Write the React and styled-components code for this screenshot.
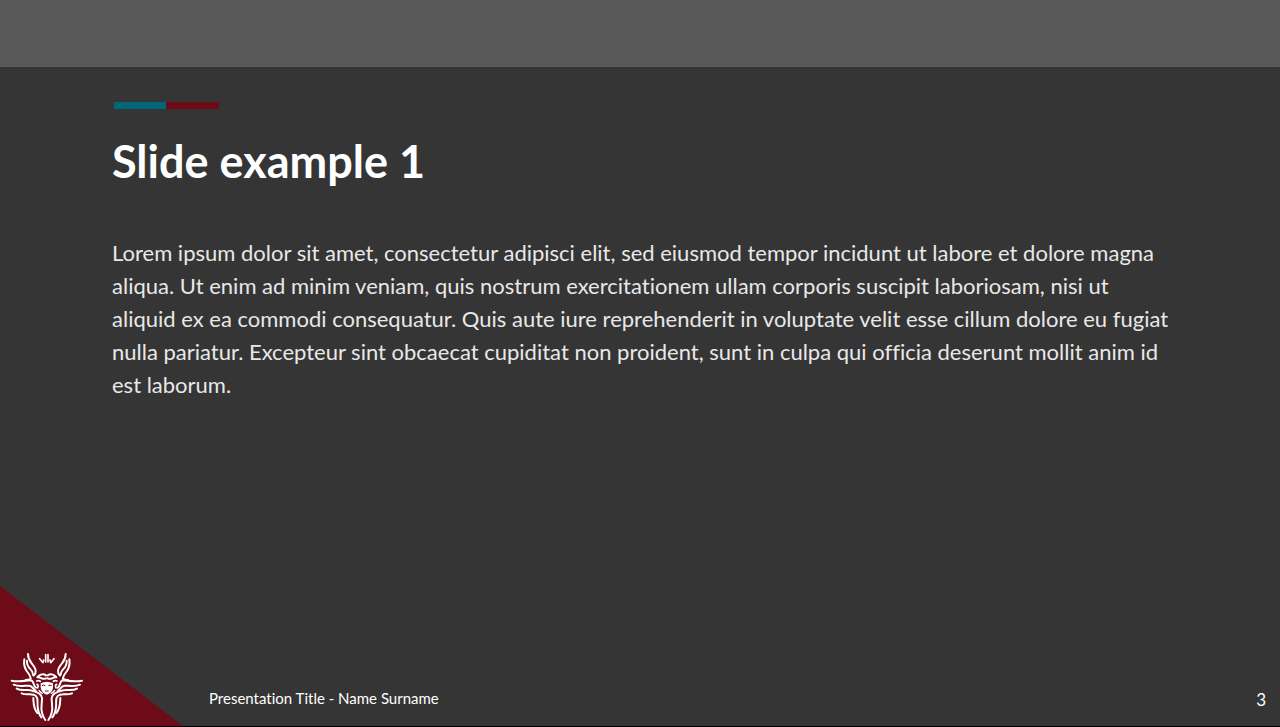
import React from "react";
import styled, { createGlobalStyle } from "styled-components";

const GlobalStyle = createGlobalStyle`
  * { box-sizing: border-box; }
  body { margin: 0; background: #353535; }
`;

const Slide = styled.main`
  display: flex;
  flex-direction: column;
  min-height: 100vh;
  background: #353535;
  border-bottom: 1px solid #000;
  color: #fff;
  font-family: Lato, "Open Sans", sans-serif;
  font-variant-ligatures: none;
`;

const TopBand = styled.div`
  height: 67px;
  background: #595959;
`;

const Content = styled.section`
  flex: 1;
  padding: 35px 96px 0 112px;
`;

const Accent = styled.div`
  display: flex;
  margin-left: 2px;
`;

const AccentBar = styled.span`
  width: ${(p) => p.$width};
  height: 7px;
  background: ${(p) => p.$color};
`;

const Title = styled.h1`
  margin: 24px 0 0;
  font-size: 45px;
  line-height: 56px;
  font-weight: 700;
`;

const Body = styled.p`
  margin: 47px 0 0;
  color: #e8e8e8;
  font-size: 22px;
  line-height: 33px;
`;

const Line = styled.span`
  display: block;
  white-space: nowrap;
`;

const Footer = styled.footer`
  display: flex;
  align-items: flex-end;
  gap: 26px;
  padding-right: 14px;
`;

const Corner = styled.div`
  display: flex;
  align-items: flex-end;
  width: 183px;
  height: 140px;
  background: #6d0b18;
  clip-path: polygon(0 0, 100% 100%, 0 100%);
`;

const FooterText = styled.span`
  padding-bottom: 16px;
  font-size: 15px;
  line-height: 24px;
`;

const PageNumber = styled.span`
  margin-left: auto;
  padding-bottom: 14px;
  font-size: 17px;
  line-height: 24px;
`;

const LogoSvg = styled.svg`
  display: block;
  width: 100px;
  height: 86px;
`;

function HalfCherub() {
  return (
    <g fill="none" stroke="#fff" strokeWidth="6" strokeLinecap="round" strokeLinejoin="round">
      <path d="M119 56 L129 68 L131 60 M137 44 L137 66" strokeWidth="5" />
      <path d="M84 42 Q84 57 95 70 Q106 83 107 92 Q108 100 101 107" />
      <path d="M73 58 Q70 78 80 93 Q92 108 92 116 Q88 120 77 120" />
      <path d="M81 62 Q80 77 90 86 Q99 95 99 104" />
      <path d="M35 122 C60 127 78 121 92 121 C103 122 99 139 108 143" />
      <path d="M41 134 C58 142 76 136 88 137 C98 139 101 149 108 153" />
      <path d="M50 146 C65 154 79 148 91 151 C105 154 125 160 126 174 C127 188 121 202 126 218 Q129 231 136 240" />
      <path d="M65 160 C77 166 89 161 101 164 C117 170 111 184 113 200 Q114 219 124 232" />
      <path d="M100 174 C101 192 100 206 112 219" />
      <path d="M138 106 C128 99 116 105 112 112 C122 109 127 121 138 115" />
      <path d="M110 123 Q117 120 121 124 M111 133 Q117 136 113 144" strokeWidth="5" />
      <path d="M117 151 Q121 157 127 160" strokeWidth="4" />
    </g>
  );
}

function Logo() {
  return (
    <LogoSvg viewBox="0 0 300 258" role="img" aria-label="Winged cherub emblem">
      <HalfCherub />
      <g transform="translate(281 0) scale(-1 1)">
        <HalfCherub />
      </g>
      <path d="M122 130 Q140 121 159 130 V143 Q157 155 146 162 Q140 165 135 162 Q124 155 122 143 Z" fill="#fff" />
      <path
        d="M126 137 Q131 134 136 137 M145 137 Q150 134 155 137 M135 153 H146"
        fill="none"
        stroke="#6d0b18"
        strokeWidth="3"
      />
    </LogoSvg>
  );
}

const lines = [
  "Lorem ipsum dolor sit amet, consectetur adipisci elit, sed eiusmod tempor incidunt ut labore et dolore magna",
  "aliqua. Ut enim ad minim veniam, quis nostrum exercitationem ullam corporis suscipit laboriosam, nisi ut",
  "aliquid ex ea commodi consequatur. Quis aute iure reprehenderit in voluptate velit esse cillum dolore eu fugiat",
  "nulla pariatur. Excepteur sint obcaecat cupiditat non proident, sunt in culpa qui officia deserunt mollit anim id",
  "est laborum.",
];

export default function App() {
  return (
    <>
      <GlobalStyle />
      <Slide>
        <TopBand />
        <Content>
          <Accent>
            <AccentBar $width="52px" $color="#006778" />
            <AccentBar $width="53px" $color="#6d0b18" />
          </Accent>
          <Title>Slide example 1</Title>
          <Body>
            {lines.map((line) => (
              <Line key={line}>{line} </Line>
            ))}
          </Body>
        </Content>
        <Footer>
          <Corner>
            <Logo />
          </Corner>
          <FooterText>Presentation Title - Name Surname</FooterText>
          <PageNumber>3</PageNumber>
        </Footer>
      </Slide>
    </>
  );
}
